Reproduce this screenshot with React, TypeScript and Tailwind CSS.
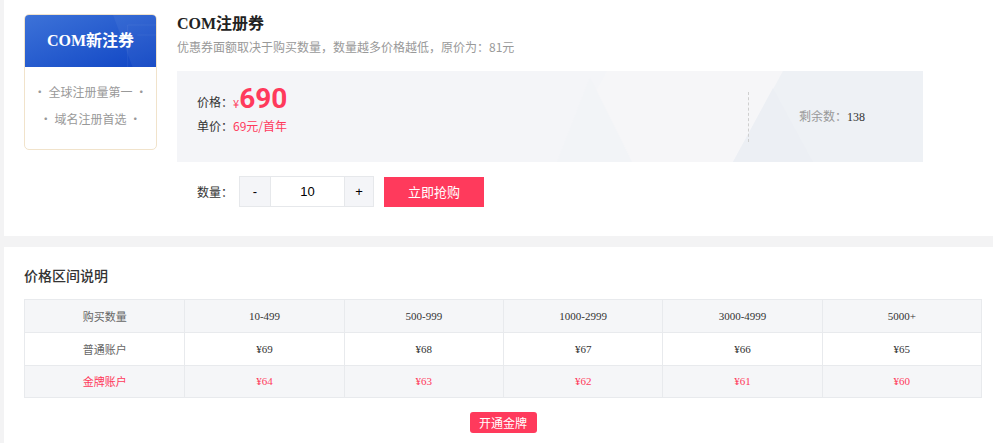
import { useState } from "react"

// COM coupon purchase page: coupon header card + price tier table.

const RED = "#ff3a5c"
const CJK = "font-['Noto_Sans_CJK_SC',sans-serif]"
const SERIF = "font-['Liberation_Serif','Noto_Sans_CJK_SC',serif]"

const TIERS = ["10-499", "500-999", "1000-2999", "3000-4999", "5000+"]
const NORMAL = [69, 68, 67, 66, 65]
const GOLD = [64, 63, 62, 61, 60]

const CouponBadge = () => (
  <div className="flex h-[136px] w-[133px] shrink-0 flex-col overflow-hidden rounded-[5px] border border-[#f1e3cb] bg-white">
    <div className="relative flex h-[52px] items-center justify-center overflow-hidden bg-gradient-to-br from-[#3d72d8] to-[#0f44c4]">
      <svg className="absolute inset-0 h-full w-full" viewBox="0 0 134 52" preserveAspectRatio="none" aria-hidden>
        <path d="M90 0 L134 0 L134 52 L110 52 Z" fill="#ffffff" opacity="0.05" />
        <path d="M105 10 L134 10 M105 10 L105 52 M115 20 L134 20" stroke="#ffffff" strokeOpacity="0.06" fill="none" />
      </svg>
      <span className={`relative text-[16px] font-bold text-white ${SERIF}`}>COM新注券</span>
    </div>
    <div className={`flex flex-1 flex-col items-center gap-[11px] pt-[17px] text-[12px] leading-[16px] text-[#999] ${CJK}`}>
      <span>• 全球注册量第一 •</span>
      <span>• 域名注册首选 •</span>
    </div>
  </div>
)

const PricePanel = () => (
  <div className="relative mt-[15px] flex h-[91px] w-[746px] items-center overflow-hidden bg-[#f4f5f8]">
    <svg className="absolute inset-0 h-full w-full" viewBox="0 0 746 91" preserveAspectRatio="none" aria-hidden>
      <path d="M380 91 L430 0 L746 0 L746 91 Z" fill="#f6f7f9" opacity="0.6" />
      <path d="M606 0 L746 0 L746 91 L556 91 Z" fill="#eef1f5" />
      <path d="M380 91 L413 6 L455 91 Z" fill="#f2f4f7" />
      <path d="M556 91 L596 17 L636 91 Z" fill="#eceff4" />
    </svg>
    <div className={`relative flex flex-1 flex-col self-start pl-[20px] pt-[13px] ${CJK}`}>
      <div className="flex items-end text-[12px] text-[#333]">
        <span className="mb-[3px]">价格：</span>
        <span className="mb-[3px] text-[11px]" style={{ color: RED }}>¥</span>
        <span className="font-['Roboto',sans-serif] text-[28px] font-bold leading-[30px]" style={{ color: RED }}>690</span>
      </div>
      <div className="mt-[4px] text-[12px] leading-[16px] text-[#333]">
        单价：<span style={{ color: RED }}>69元/首年</span>
      </div>
    </div>
    <div className="relative h-[50px] border-l border-dashed border-[#cfcfcf]" />
    <div className={`relative w-[174px] pl-[50px] text-[12px] text-[#999] ${CJK}`}>
      剩余数：<span className={`text-[#333] ${SERIF}`}>138</span>
    </div>
  </div>
)

const QuantityRow = () => {
  const [qty, setQty] = useState(10)
  return (
    <div className={`mt-[14px] flex items-center pl-[20px] ${CJK}`}>
      <span className="w-[42px] text-[12px] text-[#333]">数量：</span>
      <div className="flex h-[31px] border border-[#e6e8eb]">
        <button type="button" onClick={() => setQty((q) => Math.max(10, q - 1))} className="w-[30px] bg-[#f4f5f8] font-['Liberation_Sans',sans-serif] text-[13px] text-black">-</button>
        <input
          value={qty}
          onChange={(e) => setQty(Number(e.target.value.replace(/[^0-9]/g, "")) || 0)}
          className="w-[75px] border-x border-[#e6e8eb] bg-white text-center font-['Liberation_Sans',sans-serif] text-[13px] text-black outline-none"
        />
        <button type="button" onClick={() => setQty((q) => q + 1)} className="w-[28px] bg-[#f4f5f8] font-['Liberation_Sans',sans-serif] text-[13px] text-black">+</button>
      </div>
      <button type="button" className="ml-[10px] h-[30px] w-[100px] text-[13px] text-white" style={{ backgroundColor: RED }}>
        立即抢购
      </button>
    </div>
  )
}

const Cell = ({ children, red }: { children: React.ReactNode; red?: boolean }) => (
  <div className={`flex items-center justify-center border-l border-[#e8eaed] text-[11px] first:border-l-0 ${red ? "text-[#ff3a5c]" : "text-[#333]"}`}>
    {children}
  </div>
)

const PriceTable = () => (
  <div className={`mt-[14px] w-[958px] border border-[#e8eaed] ${SERIF}`}>
    <div className="grid h-[32px] grid-cols-6 bg-[#f5f6f8]">
      <Cell><span className={`text-[#666] ${CJK}`}>购买数量</span></Cell>
      {TIERS.map((t) => <Cell key={t}>{t}</Cell>)}
    </div>
    <div className="grid h-[33px] grid-cols-6 border-t border-[#e8eaed] bg-white">
      <Cell><span className={`text-[#666] ${CJK}`}>普通账户</span></Cell>
      {NORMAL.map((p) => <Cell key={p}>¥{p}</Cell>)}
    </div>
    <div className="grid h-[32px] grid-cols-6 border-t border-[#e8eaed] bg-[#f5f6f8]">
      <Cell red><span className={CJK}>金牌账户</span></Cell>
      {GOLD.map((p) => <Cell key={p} red>¥{p}</Cell>)}
    </div>
  </div>
)

export default function App() {
  return (
    <div className="h-[443px] w-[993px] overflow-hidden bg-[#f3f3f4] pl-[4px]">
      {/* Coupon card */}
      <div className="flex h-[236px] w-[989px] bg-white pl-[20px] pt-[14px]">
        <CouponBadge />
        <div className="ml-[20px] flex flex-col">
          <h1 className={`mt-[-1px] text-[16px] font-bold leading-[22px] text-[#222] ${SERIF}`}>COM注册券</h1>
          <p className={`mt-[3px] text-[12px] leading-[18px] text-[#999] ${CJK}`}>
            优惠券面额取决于购买数量，数量越多价格越低，原价为：81元
          </p>
          <PricePanel />
          <QuantityRow />
        </div>
      </div>

      {/* Price tiers */}
      <div className="mt-[11px] h-[200px] w-[989px] bg-white pl-[20px] pt-[18px]">
        <h2 className={`text-[14px] font-medium leading-[20px] text-[#333] ${CJK}`}>价格区间说明</h2>
        <PriceTable />
        <div className="flex w-[958px] justify-center pt-[14px]">
          <button type="button" className={`h-[21px] w-[67px] rounded-[3px] text-[12px] text-white ${CJK}`} style={{ backgroundColor: RED }}>
            开通金牌
          </button>
        </div>
      </div>
    </div>
  )
}
